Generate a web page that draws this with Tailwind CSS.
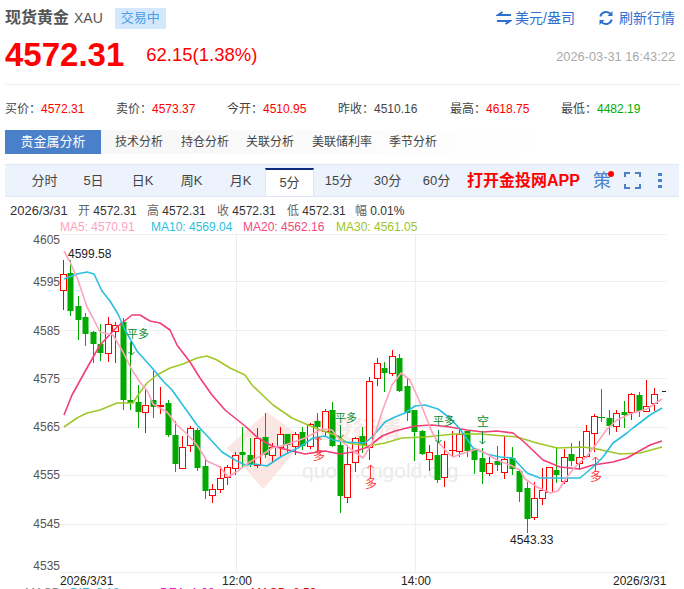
<!DOCTYPE html>
<html lang="zh">
<head>
<meta charset="UTF-8">
<title>现货黄金 XAU</title>
<script src="https://cdn.jsdelivr.net/npm/@tailwindcss/browser@4"></script>
</head>
<body class="h-[589px] overflow-hidden bg-white font-['Liberation_Sans','Noto_Sans_CJK_SC',sans-serif] text-xs text-[#444]">
<div class="flex h-[36px] items-center justify-between pl-[5px] pr-[9px]">
  <div class="flex items-center">
    <span class="text-base font-bold text-[#555]">现货黄金</span>
    <span class="ml-[5px] text-sm text-[#555]">XAU</span>
    <span class="ml-[12px] flex h-[21px] items-center bg-[#d3e8fd] px-[6px] text-[13px] text-[#4a9be8]">交易中</span>
  </div>
  <div class="flex items-center text-sm text-[#2f6fd0]">
    <svg width="16" height="14" viewBox="0 0 16 14" fill="none" stroke="#2f6fd0" stroke-width="2" class="mr-[3px]"><path d="M15 4H2L6.500 1"/><path d="M1 10h13l-4.500 3"/></svg>
    <span>美元/盎司</span>
    <svg width="16" height="16" viewBox="0 0 16 16" fill="none" stroke="#2f6fd0" stroke-width="2" class="ml-[23px] mr-[5px]"><path d="M2.300 6.500A6 6 0 0 1 13 4.500"/><path d="M13.700 9.500A6 6 0 0 1 3 11.500"/><path d="M14.500 1v5h-5" stroke-width="0" fill="#2f6fd0"/><path d="M1.500 15v-5h5" stroke-width="0" fill="#2f6fd0"/></svg>
    <span>刷新行情</span>
  </div>
</div>
<div class="mx-[5px] flex h-[49px] items-center justify-between border-b border-[#eee] pb-[10px] pr-[4px]">
  <div class="flex items-center text-[#f00]">
    <span class="text-[33px] font-bold">4572.31</span>
    <span class="ml-[22px] text-[18.500px]">62.15(1.38%)</span>
  </div>
  <span class="mt-[4px] text-[12.800px] text-[#aaa]">2026-03-31 16:43:22</span>
</div>
<div class="mx-[5px] grid h-[45px] grid-cols-[111px_111px_111px_112px_111px_111px] items-center pt-[3px]">
  <div>买价：<span class="text-[#f00]">4572.31</span></div>
  <div>卖价：<span class="text-[#f00]">4573.37</span></div>
  <div>今开：<span class="text-[#f00]">4510.95</span></div>
  <div>昨收：<span>4510.16</span></div>
  <div>最高：<span class="text-[#f00]">4618.75</span></div>
  <div>最低：<span class="text-[#0a0]">4482.19</span></div>
</div>
<div class="mx-[5px] flex h-[24px] items-center bg-gradient-to-r from-[#f5f5f5] to-white to-[80%]">
  <div class="flex h-full w-[96px] items-center justify-center bg-[#4a80c9] text-[13px] text-white">贵金属分析</div>
  <div class="ml-[14px] w-[66px]">技术分析</div>
  <div class="w-[65px]">持仓分析</div>
  <div class="w-[66px]">关联分析</div>
  <div class="w-[77px]">美联储利率</div>
  <div>季节分析</div>
</div>
<div class="mx-[5px] mt-[10px] flex h-[33px] items-stretch whitespace-nowrap border-y border-[#dde6f3] bg-[#ecf3fc] pl-[15px] text-[13px]">
  <div class="flex w-[49px] items-center justify-center">分时</div>
  <div class="flex w-[49px] items-center justify-center">5日</div>
  <div class="flex w-[49px] items-center justify-center">日K</div>
  <div class="flex w-[49px] items-center justify-center">周K</div>
  <div class="flex w-[49px] items-center justify-center">月K</div>
  <div class="mt-[3px] flex w-[49px] items-center justify-center border-x border-t-[2px] border-x-[#dde6f3] border-t-[#0b2a80] bg-white">5分</div>
  <div class="flex w-[49px] items-center justify-center">15分</div>
  <div class="flex w-[49px] items-center justify-center">30分</div>
  <div class="flex w-[49px] items-center justify-center">60分</div>
  <div class="ml-[6px] flex items-center text-base font-bold text-[#f00]">打开金投网APP</div>
  <div class="relative ml-[13px] flex items-center text-lg text-[#4a80c9]">策<span class="absolute right-[-3px] top-[6px] h-[6px] w-[6px] rounded-full bg-[#f00]"></span></div>
  <svg width="17" height="17" viewBox="0 0 17 17" fill="none" stroke="#4a80c9" stroke-width="2" class="ml-[13px] self-center"><path d="M1 5V1h5M11 1h5v4M16 12v4h-5M6 16H1v-4"/></svg>
  <div class="ml-[17px] flex flex-col justify-center gap-[3px]"><span class="h-[3px] w-[4px] bg-[#4a80c9]"></span><span class="h-[3px] w-[4px] bg-[#4a80c9]"></span><span class="h-[3px] w-[4px] bg-[#4a80c9]"></span></div>
</div>
<div class="mt-[6px] flex h-[16px] items-center whitespace-nowrap pl-[10px] text-[#333]">
  <span class="w-[68px] text-[13px]">2026/3/31</span>
  <span class="w-[69px]"><span class="text-[#666]">开</span> 4572.31</span>
  <span class="w-[70px]"><span class="text-[#666]">高</span> 4572.31</span>
  <span class="w-[70px]"><span class="text-[#666]">收</span> 4572.31</span>
  <span class="w-[68px]"><span class="text-[#666]">低</span> 4572.31</span>
  <span><span class="text-[#666]">幅</span> 0.01%</span>
</div>
<div class="flex h-[14px] items-start pl-[60px] leading-[16px]">
  <span class="w-[91px] text-[#ffa3bd]">MA5: 4570.91</span>
  <span class="w-[92px] text-[#2bbfdf]">MA10: 4569.04</span>
  <span class="w-[93px] text-[#f24a7d]">MA20: 4562.16</span>
  <span class="text-[#9cc42a]">MA30: 4561.05</span>
</div>
<svg id="chart" width="684" height="356" viewBox="0 233 684 356" class="block" font-size="12">
  <g id="mark">
    <path d="M267 412L305 440 263 489 227 448Z" fill="#fbe6e1"/>
    <path d="M247 436L278 446 262 468 240 450Z" fill="#fff" opacity=".55"/>
    <text x="305" y="438" font-size="24" font-weight="bold" fill="#fbe9e5">金投行情</text>
    <text x="302" y="478" font-size="21" fill="#eaeaea">quote.cngold.org</text>
  </g>
  <g id="grid" stroke="#eee" fill="none"></g>
  <g id="sticks"></g>
  <g id="lines" fill="none" stroke-width="1.600" stroke-linejoin="round"></g>
  <g fill="#555" text-anchor="end">
    <text x="60" y="244">4605</text><text x="60" y="286">4595</text><text x="60" y="335">4585</text><text x="60" y="383">4575</text>
    <text x="60" y="431">4565</text><text x="60" y="479">4555</text><text x="60" y="528">4545</text><text x="60" y="570">4535</text>
  </g>
  <g fill="#222">
    <text x="68" y="258">4599.58</text>
    <text x="510" y="544">4543.33</text>
    <text x="60" y="585">2026/3/31</text>
    <text x="222" y="585">12:00</text>
    <text x="401" y="585">14:00</text>
    <text x="613" y="585">2026/3/31</text>
    <path d="M662 391.500h4" stroke="#222"/>
  </g>
  <g fill="#0a8a30" font-size="11">
    <text x="127" y="338">平多</text><text x="335" y="422">平多</text><text x="433" y="425">平多</text><text x="477" y="426" font-size="12">空</text>
  </g>
  <g stroke="#0a8a30" fill="none">
    <path d="M131.500 342v13M128.500 352l3 3 3-3"/><path d="M340.500 425v13M337.500 435l3 3 3-3"/><path d="M438.500 430v13M435.500 440l3 3 3-3"/><path d="M482.500 431v13M479.500 441l3 3 3-3"/>
  </g>
  <g fill="#f33">
    <text x="313" y="460">多</text><text x="365" y="488">多</text><text x="590" y="481">多</text>
  </g>
  <g stroke="#f33" fill="none">
    <path d="M318.500 449v-12M315.500 440l3-3 3 3"/><path d="M370.500 478v-13M367.500 468l3-3 3 3"/><path d="M595.500 470v-13M592.500 460l3-3 3 3"/>
  </g>
  <g>
    <text x="25" y="597" fill="#888">MACD:</text><text x="70" y="597" fill="#2bbfdf">DIF: 8.18</text><text x="160" y="597" fill="#e020c0">DEA: 1.00</text><text x="251" y="597" fill="#d01010">MACD: 8.53</text>
  </g>
</svg>
<script>
// high, body top, body bottom, low, r/g (pixels read off the chart)
const candles = [
  [260,274,290,310,"r"],[260,273,311,316,"g"],[296,306,320,340,"g"],[313,317,334,346,"g"],[331,332,344,363,"g"],
  [324,344,353,361,"g"],[317,324,353,362,"r"],[322,325,331,363,"r"],[318,322,400,410,"g"],[342,400,403,410,"g"],
  [385,402,412,428,"g"],[388,405,412,433,"r"],[371,400,407,418,"g"],[387,405,406,414,"r"],[400,403,435,437,"g"],
  [421,435,464,472,"g"],[436,447,468,468,"r"],[426,428,445,452,"r"],[428,430,468,471,"g"],[457,466,491,499,"g"],
  [484,489,495,503,"r"],[466,478,489,493,"r"],[465,467,477,485,"r"],[452,455,468,475,"r"],[427,452,455,467,"g"],
  [438,455,464,467,"g"],[428,438,465,468,"r"],[413,437,455,458,"g"],[443,447,455,462,"r"],[427,434,447,457,"r"],
  [434,434,445,454,"g"],[432,434,446,455,"r"],[427,432,446,450,"g"],[423,424,446,449,"r"],[413,421,427,452,"g"],
  [409,411,431,436,"r"],[402,410,446,447,"g"],[425,445,496,513,"g"],[445,464,497,503,"r"],[437,438,462,472,"r"],
  [427,436,445,453,"g"],[377,381,447,460,"r"],[358,363,378,386,"r"],[362,368,373,392,"g"],[350,356,373,376,"r"],
  [354,358,391,392,"g"],[377,386,413,421,"g"],[410,410,432,461,"g"],[430,431,454,455,"g"],[445,452,459,471,"r"],
  [440,455,480,483,"g"],[441,454,477,487,"r"],[431,450,450,457,"r"],[428,434,451,457,"r"],[431,431,451,457,"g"],
  [448,449,460,474,"g"],[448,458,472,484,"g"],[457,463,473,476,"r"],[446,461,465,471,"g"],[436,459,472,479,"r"],
  [447,458,469,475,"g"],[470,471,492,502,"g"],[482,488,519,533,"g"],[482,498,517,520,"r"],[468,490,498,505,"r"],
  [467,467,492,492,"r"],[447,470,475,483,"g"],[449,457,481,484,"r"],[443,454,461,466,"g"],[441,457,463,470,"r"],
  [425,431,456,458,"r"],[414,416,433,452,"r"],[389,417,417,422,"g"],[410,418,426,435,"g"],[410,413,426,432,"r"],
  [401,412,415,428,"g"],[393,394,412,420,"r"],[392,395,411,417,"g"],[380,406,411,412,"r"],[388,394,403,411,"r"]
];
const ma = {
  "#a0c82a":"64,427 77,418 87,413 100,410 117,403 133,403 138,395 147,383 157,375 170,368 183,364 197,358 207,356 217,360 230,368 245,375 252,385 273,405 292,418 315,428 335,435 348,443 368,446 385,443 402,438 425,437 455,434 480,434 517,437 537,443 557,448 583,447 597,449 620,454 640,453 662,447",
  "#f23d75":"64,415 72,395 87,368 100,345 117,327 132,315 140,315 150,321 160,323 170,330 177,345 190,362 200,378 212,395 225,410 245,426 258,438 272,446 288,450 305,454 325,451 340,454 353,452 368,447 382,436 395,431 415,426 432,425 450,427 467,430 483,432 497,431 513,433 523,441 543,460 560,467 580,469 593,465 613,462 627,458 650,445 662,441",
  "#2bbfdf":"64,279 77,274 87,272 94,274 102,291 110,301 118,314 125,330 137,351 153,369 163,381 172,390 187,411 197,425 210,439 222,452 235,460 245,465 255,464 267,466 282,456 298,448 313,438 325,436 333,440 345,442 365,443 373,436 385,422 395,417 405,413 415,406 425,405 438,409 450,418 460,429 473,448 487,454 500,457 513,458 527,473 540,478 557,478 580,478 593,467 603,457 613,443 627,433 633,428 650,415 662,408",
  "#ffa3bd":"64,251 70,262 78,280 87,307 93,318 100,332 113,335 123,352 132,370 140,382 148,392 153,404 167,412 177,425 187,434 197,445 207,461 220,467 228,477 238,471 248,463 262,455 272,448 285,445 305,438 322,429 332,430 340,440 352,450 363,458 372,443 382,412 392,385 401,373 410,380 422,407 432,432 438,442 447,452 453,457 467,452 477,449 487,454 497,460 510,465 520,470 525,479 537,487 550,493 558,491 567,477 575,467 587,456 597,443 607,429 617,420 630,414 647,409 653,405 662,399"
};

let grid = "";
for (const y of [234,281,330,378,427,475,524,572]) grid += `<path d="M60 ${y+.5}H666"/>`;
grid += `<path d="M236.500 234V572M415.500 234V572"/>`;
document.getElementById("grid").innerHTML = grid;

let sticks = "";
candles.forEach((c, i) => {
  const x = Math.floor(63.3 + 7.48 * i), col = c[4] == "r" ? "#f00" : "#0a0";
  sticks += `<path d="M${x+.5} ${c[0]}V${c[3]}" stroke="${col}"/>`;
  if (c[2] - c[1] < 1) sticks += `<path d="M${x-3} ${c[1]+.5}h7" stroke="${col}"/>`;
  else if (c[4] == "r") sticks += `<rect x="${x-2.5}" y="${c[1]+.5}" width="6" height="${c[2]-c[1]}" fill="#fff" stroke="${col}"/>`;
  else sticks += `<rect x="${x-2.5}" y="${c[1]}" width="6" height="${c[2]-c[1]}" fill="${col}"/>`;
});
document.getElementById("sticks").innerHTML = sticks;

let lines = "";
for (const col in ma) lines += `<polyline points="${ma[col]}" stroke="${col}"/>`;
document.getElementById("lines").innerHTML = lines;
</script>
</body>
</html>
